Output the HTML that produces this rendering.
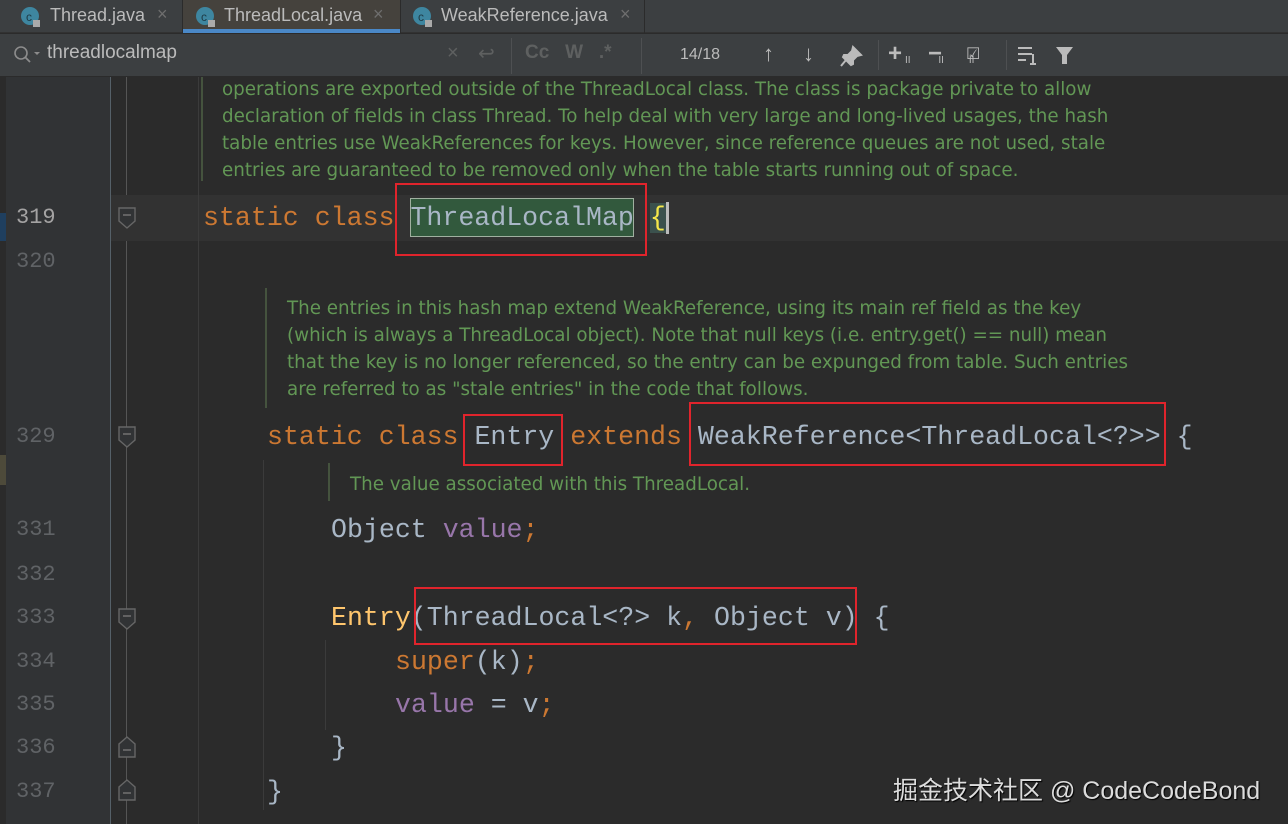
<!DOCTYPE html>
<html><head><meta charset="utf-8"><style>
*{margin:0;padding:0;box-sizing:border-box}
body{width:1288px;height:824px;background:#2b2b2b;position:relative;overflow:hidden;font-family:"Liberation Sans",sans-serif}
.a{position:absolute;white-space:pre}
.code{font-family:"Liberation Mono",monospace;font-size:26.6px;line-height:44px;height:44px;color:#a9b7c6}
.kw{color:#cc7832}.fd{color:#9876aa}.fn{color:#ffc66d}
.ln{font-family:"Liberation Mono",monospace;font-size:22px;color:#606366;left:16px;line-height:44px;height:44px}
.cm{font-family:"DejaVu Sans",sans-serif;font-size:18.3px;color:#629755;line-height:27px}
.box{position:absolute;border:2px solid #e0242c}
.fold{position:absolute;left:118px;width:18px;height:22px}
</style></head><body>
<!-- tabs -->
<div class="a" style="left:0;top:0;width:1288px;height:33px;background:#3c3f41;border-bottom:1px solid #323232"></div>
<div class="a" style="left:183px;top:0;width:218px;height:33px;background:#45423d"></div>
<div class="a" style="left:183px;top:29px;width:218px;height:4px;background:#4a88c7"></div>
<div class="a" style="left:400px;top:0;width:1px;height:33px;background:#2b2b2b"></div>
<div class="a" style="left:644px;top:0;width:1px;height:33px;background:#2b2b2b"></div>
<div class="a" style="left:182px;top:0;width:1px;height:33px;background:#2b2b2b"></div>
<svg class="a" style="left:20px;top:5px" width="24" height="24"><circle cx="10" cy="11" r="9" fill="#3e86a0"/><text x="6" y="16" font-size="12" fill="#1d3a45" font-family="Liberation Sans">c</text><rect x="13" y="15" width="7" height="7" fill="#aaa"/></svg>
<div class="a" style="left:50px;top:5px;font-size:18px;color:#bbbbbb">Thread.java</div>
<div class="a" style="left:157px;top:4px;font-size:18px;color:#6e6e6e">×</div>
<svg class="a" style="left:195px;top:5px" width="24" height="24"><circle cx="10" cy="11" r="9" fill="#3e86a0"/><text x="6" y="16" font-size="12" fill="#1d3a45" font-family="Liberation Sans">c</text><rect x="13" y="15" width="7" height="7" fill="#aaa"/></svg>
<div class="a" style="left:224px;top:5px;font-size:18px;color:#bbbbbb">ThreadLocal.java</div>
<div class="a" style="left:373px;top:4px;font-size:18px;color:#6e6e6e">×</div>
<svg class="a" style="left:412px;top:5px" width="24" height="24"><circle cx="10" cy="11" r="9" fill="#3e86a0"/><text x="6" y="16" font-size="12" fill="#1d3a45" font-family="Liberation Sans">c</text><rect x="13" y="15" width="7" height="7" fill="#aaa"/></svg>
<div class="a" style="left:441px;top:5px;font-size:18px;color:#bbbbbb">WeakReference.java</div>
<div class="a" style="left:620px;top:4px;font-size:18px;color:#6e6e6e">×</div>
<!-- search bar -->
<div class="a" style="left:0;top:34px;width:1288px;height:42px;background:#3c3f41"></div>
<svg class="a" style="left:12px;top:44px" width="30" height="22"><circle cx="9" cy="9" r="6" stroke="#8c8c8c" stroke-width="1.6" fill="none"/><path d="M13 13l5 5" stroke="#8c8c8c" stroke-width="1.8"/><path d="M22 8l3 3 3-3z" fill="#8c8c8c"/></svg>
<div class="a" style="left:47px;top:42px;font-size:19px;color:#bbbbbb">threadlocalmap</div>
<div class="a" style="left:447px;top:42px;font-size:20px;color:#5e6060">×</div>
<div class="a" style="left:478px;top:41px;font-size:20px;color:#5e6060">↩</div>
<div class="a" style="left:511px;top:38px;width:1px;height:36px;background:#4e5052"></div>
<div class="a" style="left:525px;top:42px;font-size:19px;color:#5e6060;font-weight:bold">Cc&nbsp;&nbsp;&nbsp;W&nbsp;&nbsp;&nbsp;.*</div>
<div class="a" style="left:641px;top:38px;width:1px;height:36px;background:#4e5052"></div>
<div class="a" style="left:680px;top:46px;font-size:16px;color:#bbbbbb">14/18</div>
<div class="a" style="left:763px;top:41px;font-size:22px;color:#bbbbbb;font-weight:bold">↑</div>
<div class="a" style="left:803px;top:41px;font-size:22px;color:#bbbbbb;font-weight:bold">↓</div>
<svg class="a" style="left:839px;top:45px" width="24" height="24"><path d="M14 2l8 8-4 1-4 4 0 4-2 1-8-8 1-2 4 0 4-4z M7 15l-5 6" stroke="#bbb" stroke-width="2" fill="#bbb"/></svg>
<div class="a" style="left:878px;top:40px;width:1px;height:30px;background:#4e5052"></div>
<div class="a" style="left:888px;top:40px;font-size:24px;color:#bbbbbb;font-weight:bold">+</div>
<div class="a" style="left:928px;top:40px;font-size:24px;color:#bbbbbb;font-weight:bold">−</div>
<div class="a" style="left:966px;top:44px;font-size:16px;color:#bbbbbb">☑</div>
<div class="a" style="left:905px;top:55px;font-size:10px;color:#bbbbbb">II&nbsp;&nbsp;&nbsp;&nbsp;&nbsp;&nbsp;&nbsp;&nbsp;&nbsp;&nbsp;II&nbsp;&nbsp;&nbsp;&nbsp;&nbsp;&nbsp;&nbsp;&nbsp;&nbsp;II</div>
<div class="a" style="left:1006px;top:40px;width:1px;height:30px;background:#4e5052"></div>
<svg class="a" style="left:1018px;top:46px" width="22" height="20"><path d="M0 2h14M0 8h14M0 14h8M15 8v10M12 18h6" stroke="#bbb" stroke-width="2"/></svg>
<svg class="a" style="left:1055px;top:46px" width="20" height="20"><path d="M1 1h17l-6 8v9l-5 0v-9z" fill="#bbb"/></svg>
<!-- gutter -->
<div class="a" style="left:0;top:77px;width:110px;height:747px;background:#313335"></div>
<div class="a" style="left:0;top:77px;width:6px;height:747px;background:#2b2b2b"></div>
<div class="a" style="left:0;top:213px;width:6px;height:28px;background:#1f3f5f"></div>
<div class="a" style="left:0;top:455px;width:6px;height:30px;background:#4d4a3a"></div>
<div class="a" style="left:110px;top:77px;width:1px;height:747px;background:#556068"></div>
<div class="a" style="left:126px;top:77px;width:1px;height:747px;background:#555"></div>
<!-- current line -->
<div class="a" style="left:6px;top:195px;width:104px;height:46px;background:#313335"></div>
<div class="a" style="left:111px;top:195px;width:1177px;height:46px;background:#323232"></div>
<!-- indent guides -->
<div class="a" style="left:198px;top:77px;width:1px;height:747px;background:#3b3b3b"></div>
<div class="a" style="left:263px;top:460px;width:1px;height:350px;background:#3b3b3b"></div>
<div class="a" style="left:325px;top:640px;width:1px;height:90px;background:#3b3b3b"></div>
<!-- fold markers -->
<svg class="fold" style="top:207px"><path d="M1 1h16v13l-8 7-8-7z" fill="#313335" stroke="#666" stroke-width="1.4"/><path d="M5 8h8" stroke="#777" stroke-width="1.4"/></svg>
<svg class="fold" style="top:426px"><path d="M1 1h16v13l-8 7-8-7z" fill="#313335" stroke="#666" stroke-width="1.4"/><path d="M5 8h8" stroke="#777" stroke-width="1.4"/></svg>
<svg class="fold" style="top:608px"><path d="M1 1h16v13l-8 7-8-7z" fill="#313335" stroke="#666" stroke-width="1.4"/><path d="M5 8h8" stroke="#777" stroke-width="1.4"/></svg>
<svg class="fold" style="top:736px"><path d="M1 21h16v-13l-8-7-8 7z" fill="#313335" stroke="#666" stroke-width="1.4"/><path d="M5 14h8" stroke="#777" stroke-width="1.4"/></svg>
<svg class="fold" style="top:779px"><path d="M1 21h16v-13l-8-7-8 7z" fill="#313335" stroke="#666" stroke-width="1.4"/><path d="M5 14h8" stroke="#777" stroke-width="1.4"/></svg>
<!-- line numbers -->
<div class="a ln" style="top:196px;color:#a4a3a3">319</div>
<div class="a ln" style="top:240px">320</div>
<div class="a ln" style="top:415px">329</div>
<div class="a ln" style="top:508px">331</div>
<div class="a ln" style="top:553px">332</div>
<div class="a ln" style="top:596px">333</div>
<div class="a ln" style="top:640px">334</div>
<div class="a ln" style="top:683px">335</div>
<div class="a ln" style="top:726px">336</div>
<div class="a ln" style="top:770px">337</div>
<!-- doc comments -->
<div class="a" style="left:201px;top:77px;width:2px;height:104px;background:#45533e"></div>
<div class="a cm" style="left:222px;top:76px">operations are exported outside of the ThreadLocal class. The class is package private to allow
declaration of fields in class Thread. To help deal with very large and long-lived usages, the hash
table entries use WeakReferences for keys. However, since reference queues are not used, stale
entries are guaranteed to be removed only when the table starts running out of space.</div>
<div class="a" style="left:265px;top:288px;width:2px;height:120px;background:#45533e"></div>
<div class="a cm" style="left:287px;top:295px">The entries in this hash map extend WeakReference, using its main ref field as the key
(which is always a ThreadLocal object). Note that null keys (i.e. entry.get() == null) mean
that the key is no longer referenced, so the entry can be expunged from table. Such entries
are referred to as "stale entries" in the code that follows.</div>
<div class="a" style="left:328px;top:463px;width:2px;height:38px;background:#45533e"></div>
<div class="a cm" style="left:350px;top:471px">The value associated with this ThreadLocal.</div>
<!-- code -->
<div class="a" style="left:410px;top:198px;width:224px;height:39px;background:#32593d;border:1px solid #a0b0a0"></div>
<div class="a code" style="left:203px;top:196px"><span class="kw">static class </span>ThreadLocalMap <span style="color:#f5e84a;background:#3b514d">{</span></div>
<div class="a" style="left:666px;top:202px;width:3px;height:32px;background:#bbbbbb"></div>
<div class="a code" style="left:267px;top:415px"><span class="kw">static class </span>Entry <span class="kw">extends </span>WeakReference&lt;ThreadLocal&lt;?&gt;&gt; {</div>
<div class="a code" style="left:331px;top:508px">Object <span class="fd">value</span><span class="kw">;</span></div>
<div class="a code" style="left:331px;top:596px"><span class="fn">Entry</span>(ThreadLocal&lt;?&gt; k<span class="kw">,</span> Object v) {</div>
<div class="a code" style="left:395px;top:640px"><span class="kw">super</span>(k)<span class="kw">;</span></div>
<div class="a code" style="left:395px;top:683px"><span class="fd">value</span> = v<span class="kw">;</span></div>
<div class="a code" style="left:331px;top:726px">}</div>
<div class="a code" style="left:267px;top:770px">}</div>
<!-- red boxes -->
<div class="box" style="left:395px;top:183px;width:252px;height:73px"></div>
<div class="box" style="left:463px;top:414px;width:100px;height:52px"></div>
<div class="box" style="left:689px;top:402px;width:477px;height:64px"></div>
<div class="box" style="left:414px;top:587px;width:443px;height:58px"></div>
<!-- watermark -->
<div class="a" style="left:893px;top:771px;font-size:25px;color:#dcdcdc;font-family:'Liberation Sans','Noto Sans CJK SC',sans-serif;text-shadow:1px 1px 1px #000">掘金技术社区 @ CodeCodeBond</div>
</body></html>
